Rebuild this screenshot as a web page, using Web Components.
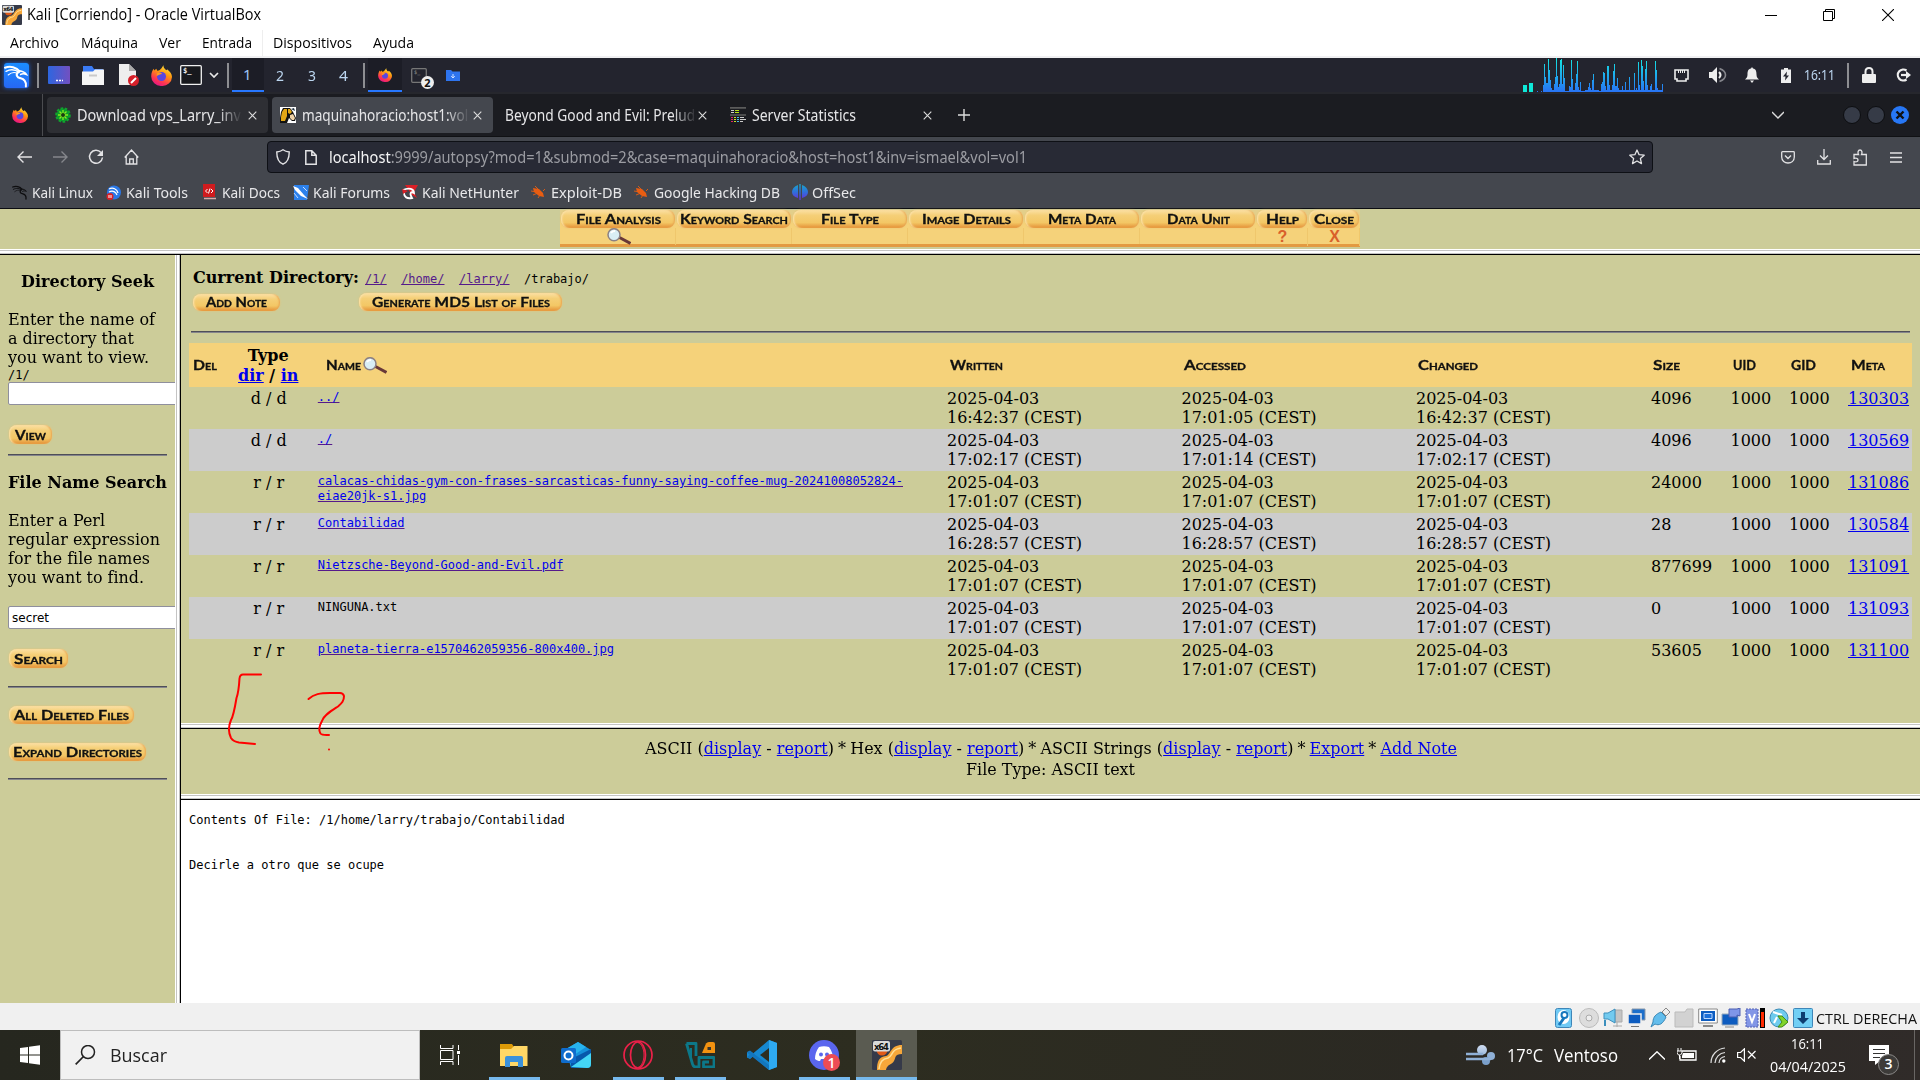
<!DOCTYPE html>
<html lang="es">
<head>
<meta charset="utf-8">
<title>Kali [Corriendo] - Oracle VirtualBox</title>
<style>
html,body{margin:0;width:1920px;height:1080px;overflow:hidden;background:#fff}
</style>
</head>
<body>
<vm-desktop></vm-desktop>
<script>
const define = (name, css, html) => customElements.define(name, class extends HTMLElement {
  constructor() {
    super();
    const root = this.attachShadow({ mode: 'open' });
    root.innerHTML = `<style>:host{display:block;box-sizing:border-box}*{box-sizing:border-box}svg{display:block}${css}</style>${typeof html === 'function' ? html(this) : html}`;
  }
});

/* Text that condenses or widens itself to the width in its "w" attribute. */
customElements.define('fit-text', class extends HTMLElement {
  constructor() {
    super();
    this.attachShadow({ mode: 'open' }).innerHTML =
      '<style>:host{display:block;white-space:pre;overflow:visible}span{display:inline-block;transform-origin:0 50%;white-space:pre}</style><span><slot></slot></span>';
  }
  connectedCallback() {
    const w = +this.getAttribute('w');
    this.style.width = w + 'px';
    const s = this.shadowRoot.querySelector('span');
    const n = s.getBoundingClientRect().width;
    if (n) s.style.transform = `scaleX(${w / n})`;
  }
});

const icon = (w, h, body, extra = '') => `<svg width="${w}" height="${h}" viewBox="0 0 ${w} ${h}" fill="none" ${extra}>${body}</svg>`;
/* A flex row: items are [start, width, markup, class]; gaps become margins. */
const row = (items, from = 0) => {
  let end = from;
  return items.map(([x, w, html, cls = '']) => {
    const m = x - end; end = x + w;
    return `<div class="${cls}" style="flex:none;margin-left:${m}px;width:${w}px">${html}</div>`;
  }).join('');
};
const txt = (x, w, s, cls = '', style = '') => [x, w, `<fit-text w="${w}" style="${style}">${s}</fit-text>`, cls];

const firefox = s => `<svg width="${s}" height="${s}" viewBox="0 0 20 20"><defs><linearGradient id="f" x1=".8" y1="0" x2=".3" y2="1"><stop offset="0" stop-color="#fff04a"/><stop offset=".4" stop-color="#ff980e"/><stop offset=".75" stop-color="#ff3750"/><stop offset="1" stop-color="#e31587"/></linearGradient></defs><path d="M12 0c-.5 2 .6 3 2 4.600C15 5.500 15.300 4 15.300 4 18 6 20 8.500 20 11.500A9.500 8.700 0 0 1 10 20 9.500 9 0 0 1 .2 11C.2 7.600 1.300 5 2.500 3.500L3.200 5.200 5 3.500 6 5.500C8 5.500 9 4 10 3z" fill="url(#f)"/><circle cx="10" cy="11" r="4.300" fill="#5a46e0"/><path d="M5.500 8c2-1.500 4-1 5 .5-2 0-3 1-5 2z" fill="#ff9a1f"/></svg>`;
const dragon = (s, c) => `<svg width="${s}" height="${s}" viewBox="0 0 24 24" fill="none" stroke="${c}" stroke-linecap="round"><path d="M1 4.500C6 2.500 12 4 15 8" stroke-width="2"/><path d="M2 8C7 5.500 11 6.500 14.500 9" stroke-width="1.400"/><path d="M4 11.500c3-2.500 6-3 9-1.500" stroke-width="1"/><path d="M14.500 7.500c3.500.5 5.500 1 7 3.500-2-.8-4-1-5.500 0" stroke-width="1.500"/><path d="M13.500 9c-2.500 2-1 5 2 5.500 4 1 6 4 5.500 8" stroke-width="2"/></svg>`;
const x64 = s => `<svg width="${s}" height="${s}" viewBox="0 0 30 30"><rect width="30" height="30" rx="1.500" fill="#363a49"/><path d="M5 30c0-9 2-13 9-14 5-1 4-11 16-11v9c-8 0-6 4-8 7-2 4-7 3-8 9z" fill="#f6a73a"/><path d="M7 29c1-7 3-10 9-11 5-2 3-9 13-10" stroke="#ffdf98" stroke-width="1.500" fill="none"/><circle cx="10" cy="10" r="5.500" fill="#e05a18"/><rect x="1" y="1" width="17" height="10.500" rx="2" fill="#d9dad9"/><text x="2" y="9.600" font-family="DejaVu Sans" font-weight="bold" font-size="8.500" textLength="15" fill="#111">x64</text></svg>`;
const lens = `<svg width="24" height="17" viewBox="0 0 24 17"><path d="M12.500 9.500 23.500 15.500" stroke="#683838" stroke-width="3"/><circle cx="7" cy="6.700" r="6" fill="#d9eef5" stroke="#8b8184" stroke-width="1.500"/><path d="M4 5c1-2 3-2 4-2" stroke="#fff" stroke-width="2" fill="none"/></svg>`;

/* ---------- host window ---------- */
define('vm-title', `:host{height:56px;background:#fff;font:16px/29px "Open Sans",sans-serif;color:#000}
.r{display:flex;height:29px;align-items:center}.m{height:27px;font-size:15px;line-height:27px}`,
`<div class="r">${row([
  [2,20,x64(20)],
  txt(27,234,'Kali [Corriendo] - Oracle VirtualBox'),
  [1765,12,icon(12,12,'<path d="M0 6.500h12" stroke="#000"/>')],
  [1823,12,icon(12,12,'<path d="M.5 2.500h9v9h-9zM2.500 2.500v-2h9v9h-2" stroke="#000"/>')],
  [1882,12,icon(12,12,'<path d="M0 0l12 12M12 0L0 12" stroke="#000" stroke-width="1.100"/>')]])}</div>
<div class="r m">${row([txt(10,49,'Archivo'),txt(81,57,'Máquina'),txt(159,22,'Ver'),txt(202,50,'Entrada'),
  [262,1,'<i style="display:block;height:26px;background:#eee"></i>'],txt(273,79,'Dispositivos'),txt(373,41,'Ayuda')])}</div>`);

/* ---------- kali panel ---------- */
const peaks = {63:7,64:28,65:15,66:9,67:9,68:33,69:22,70:12,71:4,74:8,75:15,76:34,77:16,78:5,79:8,80:32,81:33,82:8,83:27,84:14,85:1,86:1,87:1,88:1,89:6,90:5,91:32,92:13,95:9,96:18,97:31,98:5,100:10,101:1,102:1,103:1,104:1,108:5,109:9,110:4,112:12,113:18,119:1,120:1,121:8,122:10,123:20,124:19,125:6,127:26,128:26,129:7,132:7,133:21,134:28,135:6,136:6,137:14,138:4,142:6,145:10,149:15,150:2,154:19,156:4,158:30,159:7,161:32,162:26,163:11,165:23,166:31,167:7,170:6,171:8,175:31,176:22,177:4,182:8};
const cpu = `<svg width="127" height="34" viewBox="0 0 127 34"><defs><linearGradient id="g" gradientUnits="userSpaceOnUse" x1="0" x2="0" y1="0" y2="34"><stop offset="0" stop-color="#14e8e2"/><stop offset="1" stop-color="#2873f5"/></linearGradient></defs>${Array.from({ length: 120 }, (_, i) => { const h = peaks[i + 63] || 2; return `<rect x="${i + 6}" y="${34 - h}" width="1" height="${h}" fill="url(#g)"/>`; }).join('')}<path d="M0 33.500h1M4 33.500h1" stroke="#2873f5"/></svg>`;
const sep = '<i style="display:block;width:2px;height:25px;background:#8d8e92"></i>';
const termIcon = (w, h, bg, st) => icon(w, h, `<rect x=".7" y=".7" width="${w - 1.4}" height="${h - 1.4}" rx="1" fill="${bg}" stroke="${st}" stroke-width="1.300"/><text x="3" y="${h * .42}" font-family="DejaVu Sans Mono" font-weight="bold" font-size="${w * .33}" fill="${st}">$_</text>`);
define('kali-panel', `:host{height:36px;background:#23242e;border-top:2px solid #f0f0f2;display:flex;align-items:center;font:15px/30px "Noto Sans",sans-serif;color:#d9dade}
.ws{height:34px;background:#1c1d26;border-bottom:2px solid #2777ff;color:#9cc4f8;padding-left:11px;padding-top:1px}
.tk{height:34px;background:#1c1d26;border-bottom:2px solid #2777ff;padding:10px 0 0 10px}
.n{color:#bcd6f0}.b{position:relative}.b b{position:absolute;left:10px;top:8px;width:13px;height:13px;border-radius:50%;background:#eee;color:#111;font:bold 11px/13px "Noto Sans";text-align:center}`,
row([
  [4,25,`<div style="background:linear-gradient(#1b8dff,#2667f5);border-radius:3px;box-shadow:0 0 4px #1d62d8">${dragon(25,'#fff')}</div>`],
  [37,2,sep],
  [48,22,icon(22,18,'<defs><linearGradient id="d"><stop stop-color="#2d66e0"/><stop offset="1" stop-color="#7350c0"/></linearGradient></defs><rect width="22" height="18" rx="1" fill="url(#d)"/><path d="M8 14.500h2m1 0h2m1 0h1" stroke="#fff" stroke-width="1.500"/>')],
  [82,22,icon(22,20,'<path d="M1 1h9l2 3h9v6H1z" fill="#3a7bf5"/><path d="M0 6.500h11l2-2h9V20H0z" fill="#f5f5f5"/><path d="M7 10.500h8" stroke="#c9c9c9" stroke-width="2"/>')],
  [119,20,icon(20,22,'<path d="M0 0h10l7 7v14H0z" fill="#eee"/><path d="M10 0v7h7z" fill="#aaa"/><circle cx="14.500" cy="16.500" r="5.500" fill="#d6202a"/><path d="M12 19l5-5" stroke="#fff" stroke-width="2"/>')],
  [151,21,firefox(21)],
  [180,22,termIcon(22,20,'#17181d','#f1f1f1')],
  [209,10,icon(10,6,'<path d="M1 1l4 4 4-4" stroke="#e8e8e8" stroke-width="1.700"/>')],
  [227,2,sep],
  [232,32,'1','ws'],txt(276,8,'2','n'),txt(308,8,'3','n'),txt(339,9,'4','n'),
  [363,2,sep],
  [368,34,firefox(14),'tk'],
  [411,16,termIcon(16,15,'#23242e','#777') + '<b>2</b>','b'],
  [446,14,icon(14,11,'<path d="M0 0h5l1.500 1.500H14V11H0z" fill="#2e74ee"/><path d="M7 4v4M5.200 6.200 7 8l1.800-1.800" stroke="#cfe0ff"/>')],
  [1523,10,'<div style="padding-top:25px">'+icon(10,9,'<path d="M0 2h4v7H0zM6 0h4v9H6z" fill="#0fe8d8"/>')+'</div>'],
  [1537,127,cpu],
  [1674,15,icon(15,13,'<path d="M1 1h13v9h-2v2H3v-2H1z" stroke="#eee" stroke-width="1.600"/><path d="M4.500 1v3m2-3v3m2-3v3m2-3v3" stroke="#eee"/>')],
  [1709,18,icon(18,16,'<path d="M0 5h3l5-5v16l-5-5H0z" fill="#eee"/><path d="M10 5q3 3 0 6" stroke="#eee" stroke-width="2"/><path d="M10.500 1.500c8 3 8 10 0 13" stroke="#85868c" stroke-width="1.600"/>')],
  [1745,14,icon(14,16,'<path d="M7 0l1 1.500c3 .5 3.500 3 3.500 6 0 2.500 1 3.500 2.500 5H0c1.500-1.500 2.500-2.500 2.500-5 0-3 .5-5.500 3.500-6zM5 13.500h4L7 16z" fill="#eee"/>')],
  [1781,10,icon(10,15,'<path d="M0 1.500h3V0h4v1.500h3V15H0z" fill="#eee"/><path d="M6 3.500 2 8.500h2.500l-.5 4 4-5H5.500z" fill="#23242e"/>')],
  txt(1804,31,'16:11','n','margin-top:-2px'),
  [1847,2,sep],
  [1862,14,icon(14,16,'<rect y="7" width="14" height="9" rx="1" fill="#eee"/><path d="M3.500 8V4.500q0-3.500 3.500-3.500t3.500 3.500V8" stroke="#eee" stroke-width="2"/>')],
  [1896,15,icon(15,14,'<path d="M10.500 2.500a5.500 5.500 0 1 0 0 9" stroke="#eee" stroke-width="2.200"/><path d="M5 7h6" stroke="#eee" stroke-width="2.200"/><path d="M10 3l5 4-5 4z" fill="#eee"/>')]
]));

/* ---------- browser ---------- */
const cross = c => icon(9,9,`<path d="M.7.7l7.600 7.600M8.300.7L.7 8.300" stroke="${c || '#ddd'}" stroke-width="1.100"/>`);
define('browser-tab', `:host{height:36px;width:221px;border-radius:4px;display:flex;align-items:center;color:#e6e6e8;font:16px/34px "Noto Sans",sans-serif}
:host([kind=idle]){background:#2e2f34}:host([kind=active]){background:#44474e}
.t{overflow:hidden;flex:none;-webkit-mask:linear-gradient(90deg,#000 calc(100% - 24px),transparent)}.s{flex:1}::slotted(svg){display:block}`,
el => `<slot name="icon"></slot><div class="t" style="margin-left:${el.getAttribute('lead')}px;width:${el.getAttribute('tw')}px"><slot></slot></div><div class="s"></div>${cross()}<div style="width:${el.getAttribute('end')}px"></div>`);
const flower = `<svg slot="icon" style="margin-left:8px" width="16" height="16" viewBox="0 0 16 16"><circle cx="8" cy="8" r="6.500" fill="#0b9e28"/><circle cx="8" cy="8" r="6.800" fill="none" stroke="#0fa52e" stroke-dasharray="2.600 1.600" stroke-width="2"/><path d="M8 3v10M3 8h10M4.500 4.500l7 7M11.500 4.500l-7 7" stroke="#8bea1d" stroke-width="1.300"/><circle cx="8" cy="8" r="2" fill="#183c12"/></svg>`;
const hound = `<svg slot="icon" style="margin-left:8px" width="16" height="16" viewBox="0 0 16 16"><rect width="16" height="16" fill="#fff"/><path d="M3 1h7l3 4 3 6-1 3h-3l-3-3-2 5H0v-5l1-6z" fill="#111"/><path d="M4 2h3v7l-2 5H1v-4l1-5zM8 2h2l2 3-2 2-2-1z" fill="#e0a516"/><path d="M10 8l3-1 2 4-1 2h-2l-2-2z" fill="#f0d3a8"/><path d="M11 2l3-1 1 3z" fill="#234"/></svg>`;
const stats = `<svg slot="icon" style="margin-left:8px" width="16" height="16" viewBox="0 0 16 16"><path d="M0 .8h16M0 8h16" stroke="#5b5b5b" stroke-width="1.700"/><path d="M1 3.500h3M1 5.500h3" stroke="#ccc"/><path d="M5 3.500h4M5 5.500h4" stroke="#b6e317"/><path d="M1 10.500h2m-2 2h2m-2 2h2" stroke="#e0206a"/><path d="M4 10.500h2m-2 2h2m-2 2h2" stroke="#c8e020"/><path d="M7 10.500h2m-2 2h2m-2 2h2" stroke="#4bb8e8"/><path d="M10 10.500h4m-4 2h6m-6 2h3" stroke="#ccc"/></svg>`;
define('browser-tabs', `:host{height:45px;background:#1b1c21;border-top:2px solid #26272d;border-bottom:1px solid #101114;display:flex;align-items:center}`,
row([
  [12,16,firefox(16)],
  [42,1,'<i style="display:block;height:42px;background:#4b4c50"></i>'],
  [47,221,`<browser-tab kind="idle" lead="6" tw="165" end="11.500">${flower}<fit-text w="172">Download vps_Larry_inve</fit-text></browser-tab>`],
  [272,221,`<browser-tab kind="active" lead="6" tw="168" end="11.500">${hound}<fit-text w="174">maquinahoracio:host1:vol1</fit-text></browser-tab>`],
  [497,221,`<browser-tab lead="8" tw="192" end="11.500"><fit-text w="198">Beyond Good and Evil: Prelude</fit-text></browser-tab>`],
  [722,221,`<browser-tab lead="6" tw="130" end="11.500">${stats}<fit-text w="104">Server Statistics</fit-text></browser-tab>`],
  [958,12,icon(12,12,'<path d="M6 0v12M0 6h12" stroke="#ddd" stroke-width="1.400"/>')],
  [1772,12,icon(12,8,'<path d="M0 1l6 6 6-6" stroke="#ddd" stroke-width="1.400"/>')],
  [1843,18,icon(18,18,'<circle cx="9" cy="9" r="8.500" fill="#363b47" stroke="#0d0e11"/>')],
  [1867,18,icon(18,18,'<circle cx="9" cy="9" r="8.500" fill="#363b47" stroke="#0d0e11"/>')],
  [1891,18,icon(18,18,'<circle cx="9" cy="9" r="9" fill="#2777f5"/><path d="M5.500 5.500l7 7m0-7l-7 7" stroke="#111" stroke-width="2.400"/>')]
]));
define('browser-nav', `:host{height:40px;background:#44474e;display:flex;align-items:center}
.u{height:32px;background:#282a35;border:1px solid #0e1015;border-radius:4px;display:flex;align-items:center;font:16px/29px "Noto Sans",sans-serif;color:#9b9ca2}.u b{font-weight:400;color:#f4f4f5}`,
row([
  [16.5,15,icon(15,12,'<path d="M15 6H1M6.500.5 1 6l5.500 5.500" stroke="#e2e2e4" stroke-width="1.400"/>')],
  [53,15,icon(15,12,'<path d="M0 6h14M8.500.5 14 6l-5.500 5.500" stroke="#85878c" stroke-width="1.400"/>')],
  [88,16,icon(16,16,'<path d="M13 3.500a6.500 6.500 0 1 0 1.500 5" stroke="#e2e2e4" stroke-width="1.500"/><path d="M15 1v6H9z" fill="#e2e2e4"/>')],
  [124,15,icon(15,16,'<path d="M.7 8.500 7.500 1l6.800 7.500M2.200 7v8h10.600V7M5.700 15v-5h3.600v5" stroke="#e2e2e4" stroke-width="1.300"/>')],
  [267,1386,row([
    [8,14,icon(14,16,'<path d="M7 .8c2 1.500 4 2 6.200 2.200C13.300 10 11 13.500 7 15.200 3 13.500.7 10 .8 3 3 2.800 5 2.300 7 .8z" stroke="#e2e2e4" stroke-width="1.400"/>')],
    [37,12,icon(12,15,'<path d="M.8.8h6l4.400 4.400v9H.8zM6.800.8v4.400h4.400" stroke="#e2e2e4" stroke-width="1.500"/>')],
    txt(61,698,'<b>localhost</b>:9999/autopsy?mod=1&amp;submod=2&amp;case=maquinahoracio&amp;host=host1&amp;inv=ismael&amp;vol=vol1'),
    [1361,16,icon(16,16,'<path d="M8 1l2.100 4.700 5.100.5-3.800 3.400 1.100 5L8 12l-4.500 2.600 1.100-5L.8 6.200l5.100-.5z" stroke="#e2e2e4" stroke-width="1.300" stroke-linejoin="round"/>')]]),'u'],
  [1781,14,icon(14,13,'<path d="M.7 1.500q0-.8.8-.8h11q.8 0 .8.800V6c0 8-12.600 8-12.600 0z" stroke="#e2e2e4" stroke-width="1.300"/><path d="M4 4.500l3 3 3-3" stroke="#e2e2e4" stroke-width="1.400"/>')],
  [1817,14,icon(14,16,'<path d="M7 0v10M3 6.500l4 4 4-4M.7 11v4h12.600v-4" stroke="#e2e2e4" stroke-width="1.300"/>')],
  [1853,14,icon(14,17,'<path d="M1 5.500h4.500c-1-2-.5-4.500 1.500-4.500s2.500 2.500 1.500 4.500h4.800V16H1v-3.500c3 1 4-.5 4-1.500s-1-2.500-4-1.500z" stroke="#e2e2e4" stroke-width="1.300"/>')],
  [1890,12,icon(12,11,'<path d="M0 1h12M0 5.500h12M0 10h12" stroke="#e2e2e4" stroke-width="1.300"/>')]
]));
const bug = icon(14,12,'<path d="M2 2l6 1 4 4 1 4-5-1-5-4z" fill="#e85d12"/><path d="M0 5l6 1M4 0l3 3m-5 6 5-2m0 5 2-3m3-4 2-2" stroke="#e85d12" stroke-width=".9"/>');
define('bookmark-bar', `:host{height:32px;background:#44474e;border-bottom:1px solid #0c0d12;display:flex;align-items:center;padding-bottom:1px;font:15px/28px "Noto Sans",sans-serif;color:#e8e8ea}`,
row([
  [12,16,dragon(16,'#0e0e10')],txt(32,61,'Kali Linux'),
  [106,15,icon(15,15,'<circle cx="8" cy="7.500" r="7" fill="#2a78e8"/><path d="M3 4c4-2 8 0 9 4M3 7c4-2 7 0 8 3" stroke="#fff" stroke-width="1.200"/><circle cx="4" cy="11.500" r="3.500" fill="#d92027"/><path d="M3 10v3m2-3v3" stroke="#fff"/>')],txt(126,62,'Kali Tools'),
  [203,13,icon(13,16,'<path d="M0 0h12v13H0z" fill="#cf1b1e"/><path d="M1 14.500h12" stroke="#d9aaaa" stroke-width="1.500"/><path d="M4.500 5 2.500 7l2 2M8 5l2 2-2 2M7 4.500 5.500 9.500" stroke="#fff"/>')],txt(222,58,'Kali Docs'),
  [293,16,icon(16,15,'<path d="M1 0h15l-2 15H1z" fill="#2c81ec"/><path d="M0 1l5 2 6 7 4 4-7-3-6-6z" fill="#fff"/><path d="M1 8l4 5M10 2l4 4" stroke="#c6dcff"/>')],txt(313,77,'Kali Forums'),
  [402,16,icon(16,15,'<path d="M3 0h13l-4 7 3 6-5-3z" fill="#d92027"/><path d="M1 5c6-3 11-1 11 3-3-2-5 0-2 5-5 1-8-1-8-5" stroke="#fff" stroke-width="1.800"/><path d="M0 4l6 2-5 3z" fill="#d92027"/>')],txt(422,97,'Kali NetHunter'),
  [531,14,bug],txt(551,71,'Exploit-DB'),[634,14,bug],txt(654,126,'Google Hacking DB'),
  [792,16,icon(16,16,'<defs><linearGradient id="o" gradientUnits="userSpaceOnUse" x1="0" x2="0" y1="0" y2="16"><stop stop-color="#18a8c8"/><stop offset=".5" stop-color="#2f70dc"/><stop offset="1" stop-color="#6a2bd8"/></linearGradient></defs><path d="M6 1v13C-2 12-2 4 6 1zM10 1v13c8-2 8-10 0-13zM7.300 0h1.400v16H7.300z" fill="url(#o)"/>')],txt(812,44,'OffSec')
]));

/* ---------- autopsy ---------- */
const caps = 'font:bold 13px/16px Lato,sans-serif;font-variant:small-caps;color:#111;-webkit-text-stroke:.3px #111';
define('pill-button', `:host{background:linear-gradient(#fbe0a4,#f5cf77 30%,#f3c765 70%,#e6973c 96%);border-radius:8px;box-shadow:0 0 2px #eac070,inset 2px 0 2px -1px #fce4ae,inset -2px 0 2px -1px #e8a552;display:flex;align-items:center;justify-content:center;flex:none;${caps}}`,
el => { el.style.width = el.getAttribute('w') + 'px'; el.style.height = el.getAttribute('h') + 'px'; return `<fit-text w="${el.getAttribute('tw')}">${el.getAttribute('label')}</fit-text>`; });
const tab = (w, tw, label, mark = '') => `<div class="c" style="width:${w}px"><pill-button w="${w - 2}" h="18" tw="${tw}" label="${label}"></pill-button><div class="m">${mark}</div></div>`;
define('autopsy-toolbar', `:host{height:40px;background:#cccc99;display:flex;justify-content:center;padding-top:1px}
.b{display:flex;height:37px;background:linear-gradient(#e3cf8b 8px,#f5d27a 14px);border-bottom:3px solid #e39a42}.c{display:flex;flex-direction:column;align-items:center}.m{height:18px;font:bold 16px/18px "Liberation Sans";color:#d9602a;display:flex;justify-content:center;border-right:1px solid #efc76c;width:100%;padding-left:2px}`,
`<div class="b">${tab(116,85,'File Analysis',lens)}${tab(116,108,'Keyword Search')}${tab(116,58,'File Type')}${tab(116,89,'Image Details')}${tab(116,68,'Meta Data')}${tab(116,63,'Data Unit')}${tab(52,33,'Help','?')}${tab(52,40,'Close','X')}</div>`);

define('frame-split', `:host{height:6px;flex:none;background:linear-gradient(#fff 1px,#c4c4c4 1px 2px,#fff 2px 4px,#c4c4c4 4px 5px,#000 5px)}
:host([vertical]){height:auto;width:6px;background:linear-gradient(90deg,#fff 1px,#c4c4c4 1px 2px,#fff 2px 4px,#c4c4c4 4px 5px,#000 5px)}`, '');

const rule = 'height:2px;background:linear-gradient(#4e4e58 1px,#85858c 1px);width:159px';
define('seek-frame', `:host{width:175px;flex:none;background:#cccc99;overflow:hidden;padding:17px 0 0 8px;font:16px/19px "DejaVu Serif",serif;color:#000;white-space:nowrap}
h3{margin:0;font-size:16px;line-height:19px;width:159px;display:flex;justify-content:center}.p{margin-top:19px}
.mono{font:12px/14px "DejaVu Sans Mono",monospace;padding-top:1px;height:15px}
.in{width:190px;height:23px;background:#fff;border:1px solid #8f8f9d;border-radius:2px;font:12px/21px "DejaVu Sans Mono",monospace;padding:1px 0 0 3px}
hr{border:0;margin:0;${rule}}pill-button{margin-left:1px}`,
`<h3><fit-text w="133">Directory Seek</fit-text></h3>
<div class="p"><fit-text w="147">Enter the name of</fit-text><fit-text w="126">a directory that</fit-text><fit-text w="141">you want to view.</fit-text></div>
<div class="mono">/1/</div><div class="in"></div>
<pill-button style="margin-top:20px" w="43" h="19" tw="31" label="View"></pill-button>
<hr style="margin-top:10px">
<h3 style="margin-top:17px"><fit-text w="159">File Name Search</fit-text></h3>
<div class="p"><fit-text w="97">Enter a Perl</fit-text><fit-text w="152">regular expression</fit-text><fit-text w="142">for the file names</fit-text><fit-text w="136">you want to find.</fit-text></div>
<div class="in" style="margin-top:19px"><fit-text w="37" style="font-family:'DejaVu Sans'">secret</fit-text></div>
<pill-button style="margin-top:20px" w="59" h="19" tw="49" label="Search"></pill-button>
<hr style="margin-top:18px">
<pill-button style="margin-top:18px" w="125" h="18" tw="115" label="All Deleted Files"></pill-button>
<pill-button style="margin-top:19px" w="137" h="18" tw="129" label="Expand Directories"></pill-button>
<hr style="margin-top:17px">`);

define('file-row', `:host{display:grid;height:42px;grid-template-columns:31px 97.500px 629.500px 234.500px 234.500px 235px 79.500px 58.500px 59px 1fr;padding-top:2px;font:16px/19px "DejaVu Serif",serif;color:#000}
:host([alt]){background:#ccc}.ty{text-align:center}.n{font:12px/15px "DejaVu Sans Mono",monospace;padding-top:1px;padding-left:.3px}.n a{color:#00e;text-decoration:underline;text-decoration-color:#551a8b}.m{color:#00e;text-decoration:underline}div{white-space:pre}`,
el => {
  const [type, name, w, a, c, size, meta, plain] = JSON.parse(el.getAttribute('data'));
  const d = t => `<div>2025-04-03\n${t} (CEST)</div>`;
  return `<div></div><div class="ty">${type}</div><div class="n">${plain ? name : `<a>${name}</a>`}</div>${d(w)}${d(a)}${d(c)}<div>${size}</div><div>1000</div><div>1000</div><div class="m">${meta}</div>`;
});
const files = [
  ['d / d','../','16:42:37','17:01:05','16:42:37','4096','130303'],
  ['d / d','./','17:02:17','17:01:14','17:02:17','4096','130569'],
  ['r / r','calacas-chidas-gym-con-frases-sarcasticas-funny-saying-coffee-mug-20241008052824-\neiae20jk-s1.jpg','17:01:07','17:01:07','17:01:07','24000','131086'],
  ['r / r','Contabilidad','16:28:57','16:28:57','16:28:57','28','130584'],
  ['r / r','Nietzsche-Beyond-Good-and-Evil.pdf','17:01:07','17:01:07','17:01:07','877699','131091'],
  ['r / r','NINGUNA.txt','17:01:07','17:01:07','17:01:07','0','131093',1],
  ['r / r','planeta-tierra-e1570462059356-800x400.jpg','17:01:07','17:01:07','17:01:07','53605','131100']
];
define('listing-frame', `:host{height:468px;flex:none;background:#cccc99;padding:13px 8px 0 8px;font:16px/19px "DejaVu Serif",serif;color:#000}
.cd{display:flex;align-items:baseline;height:19px;padding-left:4px;white-space:pre}.mono{font:12px/15px "DejaVu Sans Mono",monospace;margin-left:6px}.mono a{color:#551a8b;text-decoration:underline}
.bt{display:flex;align-items:center;padding-left:4px;height:20px;margin-top:5px}
hr{border:0;height:2px;margin:19px 2px 10px;background:linear-gradient(#4e4e58 1px,#85858c 1px)}
.h{display:flex;align-items:center;height:44px;background:#f5d27a}.cap{${caps}}.type{text-align:center;font-weight:bold;line-height:20px;padding-top:2px}.type a{color:#00e;text-decoration:underline}`,
`<div class="cd"><b><fit-text w="166">Current Directory:</fit-text></b><div class="mono"><a>/1/</a>  <a>/home/</a>  <a>/larry/</a>  /trabajo/</div></div>
<div class="bt"><pill-button w="87" h="17" tw="61" label="Add Note"></pill-button><pill-button style="margin-left:79px" w="203" h="18" tw="178" label="Generate MD5 List of Files"></pill-button></div>
<hr><div class="h">${row([txt(193,24,'Del','cap'),[220,96.5,'Type<br><a>dir</a> / <a>in</a>','type'],txt(326,35,'Name','cap'),[363,24,lens],
  txt(950,53,'Written','cap'),txt(1184,62,'Accessed','cap'),txt(1418,60,'Changed','cap'),txt(1653,27,'Size','cap'),txt(1733,23,'UID','cap'),txt(1791,25,'GID','cap'),txt(1851,34,'Meta','cap')],189)}</div>
${files.map((f, i) => `<file-row ${i % 2 ? 'alt' : ''} data='${JSON.stringify(f)}'></file-row>`).join('')}`);

define('view-frame', `:host{height:65px;flex:none;background:#cccc99;padding-top:9px;font:16px/21px "DejaVu Serif",serif;color:#000}
div{display:flex;justify-content:center}a{color:#00e;text-decoration:underline}i{font-style:normal;word-spacing:-1px}`,
`<div><fit-text w="812">ASCII (<a>display</a> - <a>report</a>)<i> * </i>Hex (<a>display</a> - <a>report</a>)<i> * </i>ASCII Strings (<a>display</a> - <a>report</a>)<i> * </i><a>Export</a><i> * </i><a>Add Note</a></fit-text></div><div><fit-text w="169">File Type: ASCII text</fit-text></div>`);
define('content-frame', `:host{flex:1;background:#fff;padding:13px 8px}pre{margin:0;font:12px/15px "DejaVu Sans Mono",monospace;color:#000}`,
`<pre>Contents Of File: /1/home/larry/trabajo/Contabilidad\n\n\nDecirle a otro que se ocupe</pre>`);
define('autopsy-page', `:host{height:794px;display:flex;flex-direction:column}.b{flex:1;display:flex;min-height:0}.c{flex:1;display:flex;flex-direction:column}`,
`<autopsy-toolbar></autopsy-toolbar><frame-split></frame-split><div class="b"><seek-frame></seek-frame><frame-split vertical></frame-split><div class="c"><listing-frame></listing-frame><frame-split></frame-split><view-frame></view-frame><frame-split></frame-split><content-frame></content-frame></div></div>`);

/* ---------- VirtualBox status bar ---------- */
define('vm-status', `:host{height:27px;background:#f0f0f0;display:flex;align-items:center;padding-top:2px;font:15px/24px "Open Sans",sans-serif;color:#111}`,
row([
  [1555,17,icon(17,20,'<rect x=".5" y=".5" width="16" height="19" rx="2" fill="#70caf5" stroke="#3e86b8"/><ellipse cx="8.500" cy="9" rx="6" ry="7" fill="#fff"/><circle cx="9.500" cy="7" r="3" stroke="#1677bd" stroke-width="2"/><path d="M9 10 4 17" stroke="#1677bd" stroke-width="3"/>')],
  [1579,20,icon(20,20,'<circle cx="10" cy="10" r="9.500" fill="#ddd" stroke="#bbb"/><circle cx="10" cy="10" r="3" fill="#eee" stroke="#aaa"/>')],
  [1603,20,icon(20,20,'<path d="M12 2h7v12h-7zM10 18h9M14 14v5" fill="#c4c4c4" stroke="#aaa"/><path d="M1 5h4l7-4v14l-7-4H1z" fill="#72caef" stroke="#3c8fbd"/><path d="M2 12v6" stroke="#3c8fbd" stroke-width="2"/>')],
  [1627,19,icon(19,19,'<path d="M5 1h13v11H5z" fill="#1c6fcb" stroke="#8a98a8"/><path d="M1 6h13v10H1z" fill="#0d5cc0" stroke="#eee" stroke-width="1.500"/><path d="M4 18.500h8" stroke="#777"/>')],
  [1650,20,icon(20,20,'<path d="M12 4l4-4 4 4-4 4z" fill="#eee" stroke="#888"/><path d="M11 4l5 5c-3 7-7 9-11 7l-4 3 2-5c0-5 3-8 8-10z" fill="#63bdec" stroke="#3a87b5"/>')],
  [1674,20,icon(20,20,'<path d="M1 4h10l2-3h6v18H1z" fill="#d2d2d2" stroke="#bbb"/>')],
  [1698,20,icon(20,20,'<path d="M.7 1h18.600v14H.7z" fill="#fff" stroke="#888"/><path d="M3 3h14v10H3z" fill="#0d5cc0"/><path d="M6 5.500h8v5H6z" fill="#1c6fd8" stroke="#bcd8ff"/><path d="M5 18h10" stroke="#888" stroke-width="2"/>')],
  [1721,20,icon(20,20,'<path d="M1 6h16v11H1z" fill="#0d5cc0" stroke="#9ab"/><path d="M8 1h8l3-1v8l-3-1v2H8z" fill="#7f96e8" stroke="#4c5eb0"/><path d="M4 19h9" stroke="#888"/>')],
  [1745,20,icon(20,20,'<path d="M1 1h12v18H1z" fill="#8296e6" stroke="#5361b5" stroke-dasharray="2 1"/><path d="M4 6l3 8 3-8" stroke="#fff" stroke-width="2"/><path d="M15 0h5v20h-5z" fill="#000"/><path d="M16 4h3v15h-3z" fill="#ff2a00"/>')],
  [1769,20,icon(20,20,'<circle cx="10" cy="10" r="9" fill="#6ecbee" stroke="#3989b5"/><path d="M4 4l9 3M5 15l3-6" stroke="#fff" stroke-width="2"/><path d="M9 8l4 0 6 6-6 5h-4l4-5z" fill="#80d42c" stroke="#458c14"/>')],
  [1793,20,icon(20,20,'<rect x=".5" y=".5" width="19" height="19" rx="1" fill="#72cff5" stroke="#3e86b8"/><path d="M8 4h4v6h4l-6 6-6-6h4z" fill="#0e3d70"/>')],
  txt(1816,101,'CTRL DERECHA')
]));

/* ---------- Windows taskbar ---------- */
define('win-taskbar', `:host{height:50px;background:linear-gradient(90deg,#26271f,#2d2d20 45%,#2b2923 75%,#302b29);display:flex;align-items:center;color:#fff;font:18px/28px "Open Sans",sans-serif}
.s{height:50px;background:#f1f1f1;border:1px solid #bdbdbd;display:flex;align-items:center;color:#222}
.o,.a{height:50px;border-bottom:3px solid #76b9ed;display:flex;align-items:center;justify-content:center;padding-top:3px}.o svg{margin-right:1px}.a{background:#5a5b51}
.p{position:relative}.bd{position:absolute;border-radius:50%;text-align:center}
.clk{font-size:15px;line-height:23px}`,
row([
  [20,20,icon(20,20,'<path d="M0 3l8-1v7.500H0zM9 1.800 20 .3v9.200H9zM0 10.500h8V18l-8-1zM9 10.500h11v9.200L9 18.200z" fill="#fff"/>')],
  [60,360,row([[14,21,icon(21,20,'<circle cx="13" cy="7" r="6.500" stroke="#222" stroke-width="1.500"/><path d="M8.500 11.500.7 19.300" stroke="#222" stroke-width="1.700"/>')],txt(49,57,'Buscar')]),'s'],
  [440,20,icon(20,20,'<path d="M.5 0v3.500H13V0M.5 5.500H13v9H.5zM.5 20v-3.500H13V20M18.500 0v5M18.500 10v10" stroke="#fff"/><path d="M17 6h3v3h-3z" fill="#fff"/>')],
  [489,51,icon(28,23,'<path d="M0 0h12l2 3v5H0z" fill="#dd9a07"/><path d="M0 5h11l3-3h13.500v20H0z" fill="#ffd766"/><path d="M5 23V14q0-2 2-2h14q2 0 2 2v9h-5v-5h-8v5z" fill="#3b91da"/>'),'o'],
  [561,30,icon(30,26,'<path d="M5 7 17 0l13 8v14q0 4-4 4H10z" fill="#1591db"/><path d="M5 7 17 0l8 5-15 10z" fill="#27b3ee"/><path d="M10 17 30 7v14q0 5-5 5H10z" fill="#0758ab"/><path d="M10 25l20-14v11q0 4-4 4z" fill="#44d6f5"/><rect y="6" width="15" height="15" rx="1.500" fill="#0f6ccc"/><circle cx="7.500" cy="13.500" r="4" stroke="#fff" stroke-width="2"/>')],
  [613,51,icon(30,30,'<ellipse cx="15" cy="15" rx="14" ry="14" stroke="#eb2149" stroke-width="1.700"/><ellipse cx="15" cy="15" rx="7.500" ry="13" stroke="#eb2149" stroke-width="1.700"/><path d="M15 2.500c8 3 8 22 0 25" stroke="#eb2149"/>'),'o'],
  [675,51,icon(30,26,'<path d="M1.500 1.500H11V14M1.500 1.500 7.500 22q1 3 3 3h3.500V15.500H29v9.500H18.500V20H24" stroke="#0c7889" stroke-width="2.800" stroke-linejoin="round"/><path d="M6 6v9" stroke="#0c7889" stroke-width="2"/><path d="M17 11 21 1.500Q22 0 24 0h4q2 0 2 2v9z" fill="#f39210"/><path d="M22.500 6.500H26" stroke="#38352c" stroke-width="3"/>'),'o'],
  [747,30,icon(30,30,'<path d="M22 0l8 3v24l-8 3L6 16.500 3 19 0 17.500v-5L3 11l3 2.500z" fill="#1688d0"/><path d="M22 8v14l-9-7z" fill="#2d2d20"/><path d="M22 0l8 3v24l-8 3z" fill="#2eaaf2"/><path d="M0 12.500 3 11l19 14v5z" fill="#1376bd"/><path d="M0 12l3-1.500 5 4-5 4L0 17l3-2.500z" fill="#1376bd"/>')],
  [799,51,'<div class="p">'+icon(30,30,'<circle cx="15" cy="15" r="15" fill="#5a66ee"/><path d="M10 7c3-1 7-1 10 0 3 4 4 8 4 12-2 1.500-3 2-5 2l-1-2h-6l-1 2c-2 0-3-.5-5-2 0-4 1-8 4-12z" fill="#fff"/><circle cx="12" cy="14.500" r="2" fill="#5a66ee"/><circle cx="18" cy="14.500" r="2" fill="#5a66ee"/>')+'<b class="bd" style="left:14px;top:14px;width:17px;height:17px;background:#ed4c55;font:600 14px/17px Open Sans">1</b></div>','o'],
  [856,61,x64(30),'a'],
  [1466,30,icon(30,20,'<defs><linearGradient id="w" gradientUnits="userSpaceOnUse" x1="0" x2="0" y1="0" y2="20"><stop stop-color="#cfdcf0"/><stop offset="1" stop-color="#6f9ac8"/></linearGradient></defs><circle cx="16" cy="5" r="5" fill="url(#w)"/><circle cx="25" cy="11" r="4" fill="#8fb0d6"/><circle cx="20" cy="16" r="4" fill="#7a9fca"/><path d="M0 9h17M0 14h25" stroke="#8fb0d6" stroke-width="2.400"/>')],
  txt(1507,36,'17°C'),txt(1554,64,'Ventoso'),
  [1649,16,icon(16,9,'<path d="M0 8.500 8 .8l8 7.700" stroke="#fff" stroke-width="1.400"/>')],
  [1677,20,icon(20,14,'<path d="M5 3h14v9H3V8" stroke="#fff" stroke-width="1.300"/><path d="M6 5h11v5H5V8z" fill="#fff"/><path d="M1 0v3m3-3v3M0 3h5v2L3.500 7h-2L0 5zM2.500 7v4" stroke="#fff"/>')],
  [1710,16,icon(16,16,'<path d="M1 16A15 15 0 0 1 15 1M5 16A11 11 0 0 1 15 5.500M9 16A7 7 0 0 1 15 9.500" stroke="#ddd" stroke-width="1.200"/><circle cx="13.800" cy="14" r="1.700" fill="#fff"/>')],
  [1737,19,icon(19,14,'<path d="M.6 4.500h3L7.400.8v12.400L3.600 9.500h-3z" stroke="#fff" stroke-width="1.200"/><path d="M11 3l7.500 7.500m0-7.500L11 10.500" stroke="#fff" stroke-width="1.200"/>')],
  [1770,76,'<fit-text w="33" style="margin-left:21px">16:11</fit-text><fit-text w="76">04/04/2025</fit-text>','clk'],
  [1869,20,'<div class="p">'+icon(20,20,'<path d="M0 0h20v16h-9l-5 4v-4H0z" fill="#fff"/><path d="M4 4.500h12M4 8.500h12M4 12.500h7" stroke="#333"/>')+'<b class="bd" style="left:9px;top:9px;width:21px;height:21px;background:#3d3b39;border:1px solid #8b8988;font:600 14px/18px Open Sans">3</b></div>'],
  [1914,1,'<i style="display:block;height:50px;background:#696664"></i>']
]));

define('pen-marks', `:host{position:absolute;left:-1px;top:0;pointer-events:none}`,
`<svg width="400" height="780" fill="none" stroke="#f00" stroke-width="2" stroke-linecap="round" stroke-linejoin="round"><path d="M262 674.500H244q-3 0-3.500 4C240 687 239 694 237.500 698 236 707 234 717 232 720 229 727 229.500 733 232 738 234 741 236 742 240 742.500L256 744"/><path d="M309.500 699C315 694 321 693 331 693H341q3 0 4 3C345 701 343 703 339 706.500 332 711 325 715 323 721 320 726 320 731 321.500 733.500 323 735.500 327 735 330 735"/><path d="M330 749.500v.1"/></svg>`);

define('vm-desktop', `:host{position:relative;width:1920px;height:1080px;background:#fff;overflow:hidden}`,
`<vm-title></vm-title><kali-panel></kali-panel><browser-tabs></browser-tabs><browser-nav></browser-nav><bookmark-bar></bookmark-bar><autopsy-page></autopsy-page><vm-status></vm-status><win-taskbar></win-taskbar><pen-marks></pen-marks>`);
</script>
</body>
</html>
